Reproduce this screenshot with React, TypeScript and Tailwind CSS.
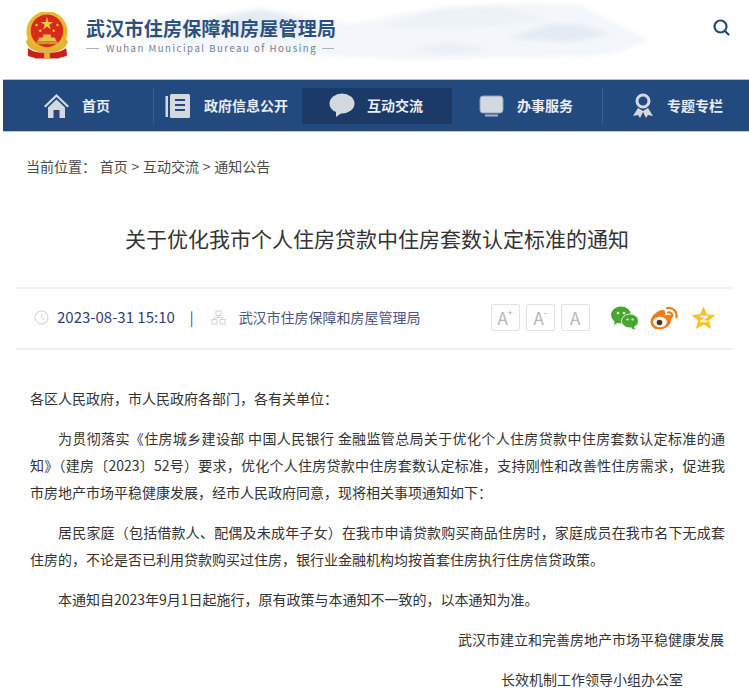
import React from "react";

const font = { fontFamily: '"Noto Sans CJK SC", "Noto Sans", sans-serif' };

function Emblem() {
  return (
    <svg width="44" height="47" viewBox="0 0 46 48">
      <circle cx="23" cy="20" r="21.5" fill="#e8b92e" />
      <circle cx="23" cy="19" r="17" fill="#d9281c" />
      <polygon points="23,5 24.6,9.8 29.6,9.8 25.5,12.8 27,17.6 23,14.6 19,17.6 20.5,12.8 16.4,9.8 21.4,9.8" fill="#f4c93a" />
      <circle cx="12" cy="13" r="1.3" fill="#f4c93a" />
      <circle cx="34" cy="13" r="1.3" fill="#f4c93a" />
      <circle cx="16" cy="19" r="1.3" fill="#f4c93a" />
      <circle cx="30" cy="19" r="1.3" fill="#f4c93a" />
      <path d="M13 30h20l-2-4h-4v-3h-8v3h-4z" fill="#eec04a" />
      <rect x="12" y="30" width="22" height="3" fill="#c99a2a" />
      <path d="M1 30c2 8 9 12 22 12s20-4 22-12l-3-3c-2 7-9 10-19 10S6 34 4 27z" fill="#e3b335" />
      <path d="M3 37c5 4 10 5 20 5s15-1 20-5l1 8c-3 2-6 1-9 3H11c-3-2-6-1-8-3z" fill="#c9201a" />
      <rect x="20" y="38" width="6" height="10" fill="#e3b335" />
    </svg>
  );
}

function Mountains() {
  return (
    <svg className="absolute left-[110px] top-0 blur-[2px]" width="540" height="62" viewBox="0 0 540 62">
      <path d="M20 40 L70 22 L110 14 L150 8 L190 14 L240 24 L300 12 L350 6 L420 3 L470 5 L520 30 L540 40 L500 55 L300 60 L100 50Z" fill="#f3f6fa" />
      <path d="M60 30 L110 18 L150 10 L185 18 L215 30 L150 34Z" fill="#e3ebf3" />
      <path d="M400 38 L440 24 L470 25 L500 34 L460 42Z" fill="#e4ebf3" />
      <path d="M270 28 L330 8 L390 6 L440 20 L380 26Z" fill="#edf2f7" />
      <path d="M300 50 L340 42 L380 50 L340 55Z" fill="#ebf0f6" />
    </svg>
  );
}

function IconBox({ sup }: { sup?: string }) {
  return (
    <div className="flex h-[27px] w-[29px] items-start justify-center rounded-[2px] border border-[#e3e3e3] pt-[2px] text-[17px] leading-[22px] text-[#b5b5b5]">
      A{sup ? <span className="text-[9px] leading-[12px] text-[#a8a8a8]">{sup}</span> : null}
    </div>
  );
}

export default function App() {
  return (
    <div className="h-[694px] w-[749px] overflow-hidden bg-white" style={font}>
      <header className="relative flex h-[79px] items-start pl-[25px] pt-[12px]">
        <Mountains />
        <div className="relative"><Emblem /></div>
        <div className="relative ml-[17px] flex flex-col pt-[3px]">
          <div className="text-[19px] font-bold leading-[26px] tracking-[0.25px] text-[#2d4f7d]">武汉市住房保障和房屋管理局</div>
          <div className="mt-[1px] flex items-center text-[9.6px] leading-[12px] tracking-[1.5px] text-[#6f7f92]">
            <span className="mr-[7px] h-px w-[13px] bg-[#a8b2bf]" />
            Wuhan Municipal Bureau of Housing
            <span className="ml-[5px] h-px w-[12px] bg-[#a8b2bf]" />
          </div>
        </div>
        <svg className="absolute left-[713px] top-[19px]" width="17" height="17" viewBox="0 0 17 17" fill="none" stroke="#1e4a7c" strokeWidth="2.2">
          <circle cx="7.5" cy="7.5" r="6" />
          <path d="M12 12l3.5 3.5" strokeLinecap="round" />
        </svg>
      </header>

      <nav className="ml-[3px] flex h-[53px] items-center border-y border-[#b9c5d5] bg-[#234a7e] pl-[41px]">
        <div className="flex h-[36px] w-[110px] items-center border-r border-[#3d6092]">
          <svg className="mr-[13px]" width="25" height="26" viewBox="0 0 25 26" fill="#d4d9e0">
            <path d="M12.5 1L0 13l1.5 1.5L12.5 4l11 10.5L25 13z" />
            <path d="M4 14.5L12.5 6.5l8.5 8V25h-5.5v-8h-6v8H4z" />
          </svg>
          <span className="text-[14px] font-bold text-[#e8edf3]">首页</span>
        </div>
        <div className="flex h-[36px] w-[148px] items-center pl-[11px]">
          <svg className="mr-[13px]" width="26" height="26" viewBox="0 0 26 26" fill="none">
            <rect x="0.5" y="3" width="2.5" height="21" fill="#d4d9e0" />
            <rect x="5" y="1" width="20" height="24" rx="1.5" fill="#d4d9e0" />
            <path d="M10 7h10M10 12h10M10 17h10" stroke="#234a7e" strokeWidth="2" />
          </svg>
          <span className="text-[14px] font-bold text-[#e8edf3]">政府信息公开</span>
        </div>
        <div className="flex h-[36px] w-[150px] items-center bg-[#1b3a67] pl-[27px]">
          <svg className="mr-[12px]" width="26" height="25" viewBox="0 0 26 25" fill="#d4d9e0">
            <ellipse cx="13" cy="10.5" rx="12.5" ry="10" />
            <path d="M7 17l0 7 7-5z" />
          </svg>
          <span className="text-[14px] font-bold text-[#e8edf3]">互动交流</span>
        </div>
        <div className="flex h-[36px] w-[150px] items-center pl-[27px]">
          <svg className="mr-[13px]" width="25" height="22" viewBox="0 0 25 22" fill="none">
            <rect x="1" y="1" width="23" height="17" rx="3" fill="#d4d9e0" stroke="#8fa3bd" />
            <rect x="6" y="19.5" width="13" height="2" fill="#aab6c6" />
          </svg>
          <span className="text-[14px] font-bold text-[#e8edf3]">办事服务</span>
        </div>
        <div className="flex h-[36px] items-center border-l border-[#3d6092] pl-[29px]">
          <svg className="mr-[13px]" width="22" height="26" viewBox="0 0 22 26" fill="none">
            <circle cx="11" cy="8" r="6" stroke="#d4d9e0" strokeWidth="3" />
            <path d="M6 15L1 23l5-1 2 3 3-6 3 6 2-3 5 1-5-8-5 3z" fill="#d4d9e0" />
          </svg>
          <span className="text-[14px] font-bold text-[#e8edf3]">专题专栏</span>
        </div>
      </nav>

      <div className="ml-[26px] mt-[24px] text-[14px] leading-[20px] text-[#4a4a4a] [word-spacing:0.6px]">当前位置： 首页 &gt; 互动交流 &gt; 通知公告</div>

      <h1 className="ml-[125px] mt-[47px] text-[21px] font-normal leading-[30px] text-[#333333]">关于优化我市个人住房贷款中住房套数认定标准的通知</h1>

      <div className="mx-[16px] mt-[34px] flex h-[63px] items-center border-y-2 border-[#f0f0f0] pb-[2px] pl-[18px]">
        <svg width="15" height="15" viewBox="0 0 15 15" fill="none" stroke="#cfcfcf" strokeWidth="1">
          <circle cx="7.5" cy="7.5" r="6.5" />
          <path d="M7.5 3.5v4l3 2.5" />
        </svg>
        <span className="ml-[8px] text-[15px] text-[#34406b]">2023-08-31 15:10</span>
        <span className="ml-[15px] text-[14px] text-[#34406b]">|</span>
        <svg className="ml-[17px]" width="15" height="15" viewBox="0 0 15 15" fill="none" stroke="#d2d2d2" strokeWidth="1">
          <rect x="5" y="1" width="5" height="4.5" />
          <rect x="1" y="9.5" width="5" height="4.5" />
          <rect x="9" y="9.5" width="5" height="4.5" />
          <path d="M7.5 5.5v2M3.5 9.5v-2h8v2" />
        </svg>
        <span className="ml-[13px] text-[14px] text-[#4a5680]">武汉市住房保障和房屋管理局</span>
        <div className="ml-[70px] flex gap-[6px]">
          <IconBox sup="+" />
          <IconBox sup="-" />
          <IconBox />
        </div>
        <svg className="ml-[21px]" width="28" height="24" viewBox="0 0 28 24">
          <ellipse cx="10" cy="9" rx="10" ry="8.5" fill="#46a62e" />
          <path d="M4 14l-1 5 5-3z" fill="#46a62e" />
          <ellipse cx="19" cy="15" rx="8.5" ry="7" fill="#46a62e" stroke="#fff" strokeWidth="0.8" />
          <path d="M23 20l1 4-4-2z" fill="#46a62e" />
          <circle cx="7" cy="7" r="1.3" fill="#fff" />
          <circle cx="13" cy="7" r="1.3" fill="#fff" />
          <circle cx="16.5" cy="13.5" r="1.1" fill="#fff" />
          <circle cx="21.5" cy="13.5" r="1.1" fill="#fff" />
        </svg>
        <svg className="ml-[11px]" width="28" height="24" viewBox="0 0 28 24" fill="none">
          <path d="M0.5 15.5C0.5 10 8 4 12.5 4c3 0 3.5 2.5 2.5 5.5 3.5-1.5 7-1 7 2 0 1-.5 2-1 2.8 0 5-5.5 9.2-12 9.2-5 0-8.5-3.5-8.5-8z" fill="#f07d1a" />
          <ellipse cx="10" cy="16" rx="7" ry="5.2" fill="#fff" />
          <circle cx="9.5" cy="16.5" r="2.8" fill="#4a3320" />
          <path d="M17 2c6-1 10.5 3.5 9.5 9.5M18 6.5c2.8-.5 4.7 1.3 4 4" stroke="#f07d1a" strokeWidth="2.2" strokeLinecap="round" />
        </svg>
        <svg className="ml-[13px]" width="25" height="24" viewBox="0 0 26 24">
          <polygon points="13,0 16.5,8 25.5,8.8 18.5,14.5 21,23.5 13,19 5,23.5 7.5,14.5 0.5,8.8 9.5,8" fill="#f6c325" />
          <path d="M9.5 10.5h7l-6 5h6.5" fill="none" stroke="#fff" strokeWidth="1.6" />
        </svg>
      </div>

      <article className="mt-[35px] pl-[30px] pr-[24px] text-justify text-[14px] leading-[27px] text-[#333333]">
        <p>各区人民政府，市人民政府各部门，各有关单位：</p>
        <p className="mt-[13px] indent-[28px]">为贯彻落实《住房城乡建设部 中国人民银行 金融监管总局关于优化个人住房贷款中住房套数认定标准的通知》（建房〔2023〕52号）要求，优化个人住房贷款中住房套数认定标准，支持刚性和改善性住房需求，促进我市房地产市场平稳健康发展，经市人民政府同意，现将相关事项通知如下：</p>
        <p className="mt-[13px] indent-[28px]">居民家庭（包括借款人、配偶及未成年子女）在我市申请贷款购买商品住房时，家庭成员在我市名下无成套住房的，不论是否已利用贷款购买过住房，银行业金融机构均按首套住房执行住房信贷政策。</p>
        <p className="mt-[13px] indent-[28px]">本通知自2023年9月1日起施行，原有政策与本通知不一致的，以本通知为准。</p>
        <p className="mt-[13px] pl-[428px]">武汉市建立和完善房地产市场平稳健康发展</p>
        <p className="mt-[13px] pl-[471px]">长效机制工作领导小组办公室</p>
      </article>
    </div>
  );
}
